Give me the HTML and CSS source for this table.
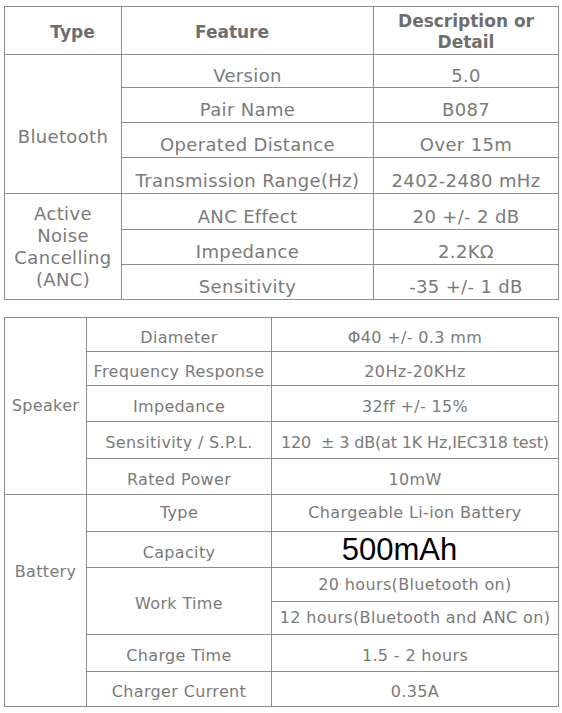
FILE: index.html
```html
<!DOCTYPE html>
<html lang="en">
<head>
<meta charset="utf-8">
<title>Specifications</title>
<link rel="stylesheet" href="styles.css">
</head>
<body>
<main class="page">
  <table class="spec spec-main">
    <colgroup>
      <col class="c-type">
      <col class="c-feature">
      <col class="c-detail">
    </colgroup>
    <thead>
      <tr class="h-head">
        <th class="th-type">Type</th>
        <th class="th-feature">Feature</th>
        <th class="th-detail">Description or<br>Detail</th>
      </tr>
    </thead>
    <tbody>
      <tr class="h33">
        <td class="group group-bt" rowspan="4">Bluetooth</td>
        <td>Version</td>
        <td>5.0</td>
      </tr>
      <tr class="h35">
        <td>Pair Name</td>
        <td>B087</td>
      </tr>
      <tr class="h35">
        <td>Operated Distance</td>
        <td>Over 15m</td>
      </tr>
      <tr class="h36">
        <td>Transmission Range(Hz)</td>
        <td>2402-2480 mHz</td>
      </tr>
      <tr class="h36">
        <td class="group group-anc" rowspan="3">Active<br>Noise<br>Cancelling<br>(ANC)</td>
        <td>ANC Effect</td>
        <td>20 +/- 2 dB</td>
      </tr>
      <tr class="h35">
        <td>Impedance</td>
        <td>2.2KΩ</td>
      </tr>
      <tr class="h35">
        <td>Sensitivity</td>
        <td>-35 +/- 1 dB</td>
      </tr>
    </tbody>
  </table>

  <table class="spec spec-sub">
    <colgroup>
      <col class="s-type">
      <col class="s-feature">
      <col class="s-detail">
    </colgroup>
    <tbody>
      <tr class="h34">
        <td class="group group-speaker" rowspan="5">Speaker</td>
        <td>Diameter</td>
        <td>Φ40 +/- 0.3 mm</td>
      </tr>
      <tr class="h34">
        <td>Frequency Response</td>
        <td>20Hz-20KHz</td>
      </tr>
      <tr class="h36">
        <td>Impedance</td>
        <td>32ff +/- 15%</td>
      </tr>
      <tr class="h37">
        <td>Sensitivity / S.P.L.</td>
        <td class="tight">120&nbsp; ± 3 dB(at 1K Hz,IEC318 test)</td>
      </tr>
      <tr class="h36">
        <td>Rated Power</td>
        <td>10mW</td>
      </tr>
      <tr class="h37">
        <td class="group group-battery" rowspan="7">Battery</td>
        <td class="flat">Type</td>
        <td class="flat">Chargeable Li-ion Battery</td>
      </tr>
      <tr class="h36">
        <td>Capacity</td>
        <td class="capacity">500mAh</td>
      </tr>
      <tr class="h34">
        <td rowspan="2">Work Time</td>
        <td class="flat">20 hours(Bluetooth on)</td>
      </tr>
      <tr class="h33">
        <td class="flat">12 hours(Bluetooth and ANC on)</td>
      </tr>
      <tr class="h37">
        <td>Charge Time</td>
        <td>1.5 - 2 hours</td>
      </tr>
      <tr class="h35">
        <td>Charger Current</td>
        <td>0.35A</td>
      </tr>
    </tbody>
  </table>
</main>
</body>
</html>
```

FILE: styles.css
```css
html, body {
  margin: 0;
  padding: 0;
  background: #ffffff;
}

.page {
  padding: 6px 0 0 4px;
  display: flex;
  flex-direction: column;
  gap: 17px;
  font-family: "DejaVu Sans", "Liberation Sans", sans-serif;
  color: #7a7a7a;
}

.spec {
  border-collapse: collapse;
  table-layout: fixed;
  width: 554px;
}

.spec th,
.spec td {
  border: 1px solid #8e8e8e;
  padding: 0;
  text-align: center;
  vertical-align: middle;
  white-space: nowrap;
}

.spec-main td {
  font-size: 18px;
  letter-spacing: 0.35px;
  line-height: 20px;
  padding-top: 10px;
}

.spec-main th {
  font-size: 17px;
  font-weight: bold;
  line-height: 21px;
  color: #6e6e6e;
  padding-top: 3px;
}

.c-type { width: 117px; }
.c-feature { width: 252px; }
.c-detail { width: 185px; }

.s-type { width: 82px; }
.s-feature { width: 185px; }
.s-detail { width: 287px; }

.spec th.th-type { padding-left: 19px; }
.spec th.th-feature { padding-right: 31px; }

.h-head { height: 48px; }
.h33 { height: 33px; }
.h34 { height: 34px; }
.h35 { height: 35px; }
.h36 { height: 36px; }
.h37 { height: 37px; }

.spec td.group-bt { padding-top: 26px; }
.spec td.group-anc {
  padding-top: 0;
  line-height: 22px;
}

.spec-sub td {
  font-size: 16px;
  letter-spacing: 0.35px;
  line-height: 20px;
  padding-top: 6px;
}

.spec-sub td.tight { letter-spacing: -0.15px; }
.spec-sub td.flat { padding-top: 0; }
.spec-sub td.group-speaker { padding-top: 0; }
.spec-sub td.group-battery {
  padding-top: 0;
  padding-bottom: 58px;
}

.spec-sub td.capacity {
  font-family: "Liberation Sans", Arial, sans-serif;
  font-size: 31px;
  letter-spacing: 0;
  line-height: 34px;
  color: #000000;
  padding-top: 0;
  padding-right: 31px;
}
```
